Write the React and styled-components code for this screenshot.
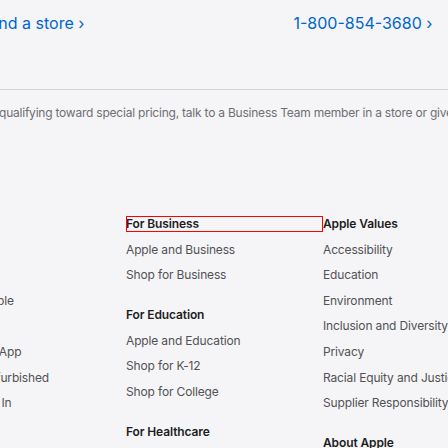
import React from 'react'
import styled, { createGlobalStyle } from 'styled-components'

const GlobalStyle = createGlobalStyle`
  body {
    margin: 0;
    background: #f5f5f7;
    font-family: Inter, "Liberation Sans", sans-serif;
  }
`
const Page = styled.div`
  width: 448px;
  height: 448px;
  overflow: hidden;
  background: #f5f5f7;
`
const ContactRow = styled.div`
  display: grid;
  grid-template-columns: 308.5px auto;
  margin-left: -15px;
  padding-top: 12px;
`
const ContactLink = styled.a`
  font-size: 16px;
  line-height: 22px;
  color: #0066cc;
  text-decoration: none;
  white-space: nowrap;
`
const Divider = styled.hr`
  margin: 55px 0 0;
  border: 0;
  border-top: 1px solid #d2d2d7;
`
const Note = styled.p`
  margin: 15px 0 0 -1px;
  font-size: 12px;
  line-height: 16px;
  letter-spacing: -0.22px;
  color: #6e6e73;
  white-space: nowrap;
`
const Footer = styled.div`
  display: grid;
  grid-template-columns: 195px 197px 197px;
  margin-left: -69px;
  margin-top: 95px;
`
const Column = styled.div`
  display: flex;
  flex-direction: column;
`
const Section = styled.div`
  & + & {
    margin-top: 14.4px;
  }
`
const Heading = styled.h3`
  margin: 0 0 9.6px;
  font-size: 12px;
  line-height: 16px;
  font-weight: 600;
  letter-spacing: -0.12px;
  color: #1d1d1f;
  white-space: nowrap;
  outline: ${(props) => (props.highlighted ? '1px solid #ff0000' : 'none')};
  outline-offset: -1px;
`
const List = styled.ul`
  margin: 0;
  padding: 0;
  list-style: none;
`
const Item = styled.li`
  margin-bottom: 9.6px;
  font-size: 12px;
  line-height: 16px;
  letter-spacing: -0.15px;
  color: #515154;
  white-space: nowrap;
`

const columns = [
  [
    {
      title: 'Apple Store',
      links: [
        'Find a Store',
        'Genius Bar',
        'Today at Apple',
        'Apple Camp',
        'Apple Store App',
        'Certified Refurbished',
        'Apple Trade In',
        'Financing',
        'Carrier Deals at Apple',
        'Order Status',
        'Shopping Help',
      ],
    },
  ],
  [
    { title: 'For Business', links: ['Apple and Business', 'Shop for Business'], highlighted: true },
    { title: 'For Education', links: ['Apple and Education', 'Shop for K-12', 'Shop for College'] },
    { title: 'For Healthcare', links: ['Apple in Healthcare', 'Health on Apple Watch', 'Health Records on iPhone'] },
  ],
  [
    {
      title: 'Apple Values',
      links: [
        'Accessibility',
        'Education',
        'Environment',
        'Inclusion and Diversity',
        'Privacy',
        'Racial Equity and Justice',
        'Supplier Responsibility',
      ],
    },
    { title: 'About Apple', links: ['Newsroom', 'Apple Leadership'] },
  ],
]

const App = () => {
  return (
    <Page>
      <GlobalStyle />
      <ContactRow>
        <ContactLink href="#">Find a store ›</ContactLink>
        <ContactLink href="#">1-800-854-3680 ›</ContactLink>
      </ContactRow>
      <Divider />
      <Note>
        qualifying toward special pricing, talk to a Business Team member in a store or give us a call.
      </Note>
      <Footer>
        {columns.map((sections, i) => (
          <Column key={i}>
            {sections.map((s) => (
              <Section key={s.title}>
                <Heading highlighted={s.highlighted}>{s.title}</Heading>
                <List>
                  {s.links.map((l) => (
                    <Item key={l}>{l}</Item>
                  ))}
                </List>
              </Section>
            ))}
          </Column>
        ))}
      </Footer>
    </Page>
  )
}

export default App
